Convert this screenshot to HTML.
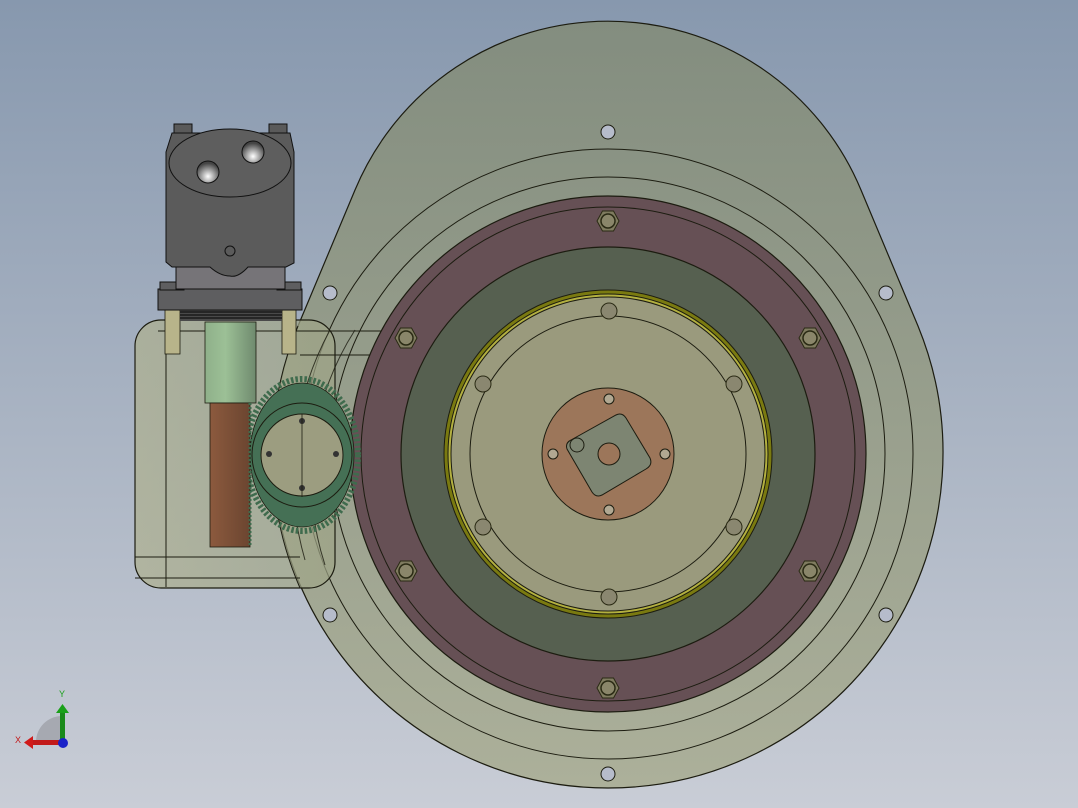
<!DOCTYPE html>
<html><head><meta charset="utf-8"><style>
html,body{margin:0;padding:0;width:1078px;height:808px;overflow:hidden}
svg{display:block}
</style></head><body>
<svg width="1078" height="808" viewBox="0 0 1078 808" xmlns="http://www.w3.org/2000/svg">
<defs>
<linearGradient id="bg" x1="0" y1="0" x2="0" y2="1">
<stop offset="0" stop-color="#8798ae"/><stop offset="1" stop-color="#c9cdd6"/>
</linearGradient>
<linearGradient id="hs" x1="0" y1="0" x2="0" y2="1">
<stop offset="0" stop-color="#838d7f"/><stop offset="1" stop-color="#acb09a"/>
</linearGradient>
<linearGradient id="shaft" x1="0" y1="0" x2="1" y2="0">
<stop offset="0" stop-color="#8fb08a"/><stop offset="0.4" stop-color="#9cc096"/><stop offset="1" stop-color="#6f8a6e"/>
</linearGradient>
<linearGradient id="rack" x1="0" y1="0" x2="1" y2="0">
<stop offset="0" stop-color="#8c5a3e"/><stop offset="1" stop-color="#6b4530"/>
</linearGradient>
<linearGradient id="box" x1="0" y1="0" x2="1" y2="0">
<stop offset="0" stop-color="#aeb08e"/><stop offset="1" stop-color="#9ea487"/>
</linearGradient>
<radialGradient id="hole" cx="0.5" cy="0.7" r="0.6">
<stop offset="0" stop-color="#ffffff"/><stop offset="1" stop-color="#444"/>
</radialGradient>
<g id="bolt"><polygon points="-11,0 -5.5,-10 5.5,-10 11,0 5.5,10 -5.5,10" fill="#7f7b5f" stroke="#2a2a14" stroke-width="1"/><circle r="7" fill="#8a866a" stroke="#2a2a14" stroke-width="1.5"/></g>
<g id="sbolt"><circle r="8" fill="#8a8770" stroke="#2a2a14" stroke-width="1"/></g>
</defs>
<rect width="1078" height="808" fill="url(#bg)"/>

<!-- housing -->
<path d="M355,190 A274,274 0 0 1 861,190 L918,326 A335,335 0 1 1 298,326 Z" fill="url(#hs)" stroke="#1c1c10" stroke-width="1.2"/>
<g fill="none" stroke="#1c1c10" stroke-width="1">
<circle cx="608" cy="454" r="305"/>
<circle cx="608" cy="454" r="277"/>
</g>
<g fill="#b6bccb" stroke="#1c1c10" stroke-width="1">
<circle cx="608" cy="132" r="7"/><circle cx="608" cy="774" r="7"/>
<circle cx="886" cy="293" r="7"/><circle cx="886" cy="615" r="7"/>
<circle cx="330" cy="293" r="7"/><circle cx="330" cy="615" r="7"/>
</g>

<!-- gearbox box -->
<rect x="135" y="320" width="200" height="268" rx="26" fill="url(#box)" fill-opacity="0.7" stroke="#1c1c10" stroke-width="1.2"/>
<g fill="none" stroke="#1c1c10" stroke-width="1">
<line x1="166" y1="330" x2="166" y2="587"/>
<line x1="135" y1="557" x2="300" y2="557"/>
<line x1="158" y1="331" x2="400" y2="331"/>
<line x1="135" y1="578" x2="300" y2="578"/>
<line x1="300" y1="355" x2="395" y2="355"/>
<rect x="398" y="320" width="40" height="265"/>
</g>
<!-- housing edge visible through box -->
<path d="M298,326 A335,335 0 0 0 300,588" fill="none" stroke="#1c1c10" stroke-width="1"/>

<!-- maroon ring -->
<circle cx="608" cy="454" r="258" fill="#665055" stroke="#1c1c10" stroke-width="1.2"/>
<circle cx="608" cy="454" r="247" fill="none" stroke="#1c1c10" stroke-width="1"/>
<circle cx="608" cy="454" r="207" fill="#566050" stroke="#1c1c10" stroke-width="1.2"/>
<!-- yellow ring -->
<circle cx="608" cy="454" r="164" fill="#7a7a10" stroke="#1c1c10" stroke-width="1"/>
<circle cx="608" cy="454" r="160" fill="#b3b040" stroke="#1c1c10" stroke-width="1"/>
<circle cx="608" cy="454" r="157" fill="#9a9a7d" stroke="#1c1c10" stroke-width="1"/>
<circle cx="608" cy="454" r="138" fill="none" stroke="#1c1c10" stroke-width="1"/>
<!-- copper -->
<circle cx="608" cy="454" r="66" fill="#9c765a" stroke="#1c1c10" stroke-width="1"/>
<path d="M571,440 L616,415 Q622,412 626,418 L650,458 Q653,465 646,469 L602,495 Q596,498 592,492 L567,449 Q565,443 571,440 Z" fill="#7d8572" stroke="#1c1c10" stroke-width="1"/>
<circle cx="577" cy="445" r="7" fill="#7d8572" stroke="#1c1c10" stroke-width="1"/>
<circle cx="609" cy="454" r="11" fill="#9c765a" stroke="#1c1c10" stroke-width="1"/>
<g fill="#b1a892" stroke="#1c1c10" stroke-width="1">
<circle cx="609" cy="399" r="5"/><circle cx="609" cy="510" r="5"/>
<circle cx="553" cy="454" r="5"/><circle cx="665" cy="454" r="5"/>
</g>
<!-- bolts -->
<use href="#bolt" x="608" y="221"/><use href="#bolt" x="608" y="688"/>
<use href="#bolt" x="406" y="338"/><use href="#bolt" x="810" y="338"/>
<use href="#bolt" x="406" y="571"/><use href="#bolt" x="810" y="571"/>
<use href="#sbolt" x="609" y="311"/><use href="#sbolt" x="609" y="597"/>
<use href="#sbolt" x="483" y="384"/><use href="#sbolt" x="734" y="384"/>
<use href="#sbolt" x="483" y="527"/><use href="#sbolt" x="734" y="527"/>

<!-- housing lines crossing gearbox (transparent look) -->
<g fill="none" stroke="#1c1c10" stroke-width="1" opacity="0.8">
<path d="M330,330 A305,305 0 0 0 305,560"/>
<path d="M355,330 A277,277 0 0 0 325,565"/>
</g>

<!-- gear -->
<ellipse cx="302" cy="455" rx="56" ry="76" fill="none" stroke="#3f6b4d" stroke-width="6" stroke-dasharray="2.5 2"/>
<ellipse cx="302" cy="455" rx="52" ry="72" fill="#457055" stroke="#1c1c10" stroke-width="0.8"/>
<ellipse cx="302" cy="455" rx="50" ry="52" fill="none" stroke="#1c1c10" stroke-width="1"/>
<circle cx="302" cy="455" r="41" fill="#9c9d80" stroke="#1c1c10" stroke-width="1"/>
<g fill="#333" ><circle cx="302" cy="421" r="3"/><circle cx="302" cy="488" r="3"/><circle cx="269" cy="454" r="3"/><circle cx="336" cy="454" r="3"/></g>
<line x1="302" y1="414" x2="302" y2="497" stroke="#1c1c10" stroke-width="0.8"/>

<!-- shaft & rack -->
<rect x="205" y="322" width="51" height="81" fill="url(#shaft)" stroke="#1c1c10" stroke-width="0.8"/>
<rect x="210" y="403" width="40" height="144" fill="url(#rack)" stroke="#1c1c10" stroke-width="0.8"/>
<line x1="250" y1="403" x2="250" y2="547" stroke="#3f6b4d" stroke-width="3" stroke-dasharray="2 2"/>

<!-- posts -->
<rect x="165" y="309" width="15" height="45" fill="#b8b48a" stroke="#1c1c10" stroke-width="0.8"/>
<rect x="282" y="309" width="14" height="45" fill="#b8b48a" stroke="#1c1c10" stroke-width="0.8"/>
<!-- grooves -->
<rect x="180" y="309" width="102" height="12" fill="#4a4a4a"/>
<g stroke="#111" stroke-width="1.2"><line x1="180" y1="312" x2="282" y2="312"/><line x1="180" y1="315" x2="282" y2="315"/><line x1="180" y1="318" x2="282" y2="318"/></g>
<!-- flange -->
<rect x="158" y="289" width="144" height="21" fill="#5e5e60" stroke="#111" stroke-width="1"/>
<rect x="160" y="282" width="24" height="8" fill="#5e5e60" stroke="#111" stroke-width="1"/>
<rect x="277" y="282" width="24" height="8" fill="#5e5e60" stroke="#111" stroke-width="1"/>
<!-- collar -->
<rect x="176" y="262" width="109" height="27" fill="#767478" stroke="#111" stroke-width="1"/>
<!-- motor block -->
<rect x="174" y="124" width="18" height="12" fill="#5a5a5a" stroke="#111" stroke-width="1"/>
<rect x="269" y="124" width="18" height="12" fill="#5a5a5a" stroke="#111" stroke-width="1"/>
<path d="M166,152 L172,133 L290,133 L294,152 L294,263 L286,267 L248,267 Q238,278 230,276 Q220,276 210,267 L172,267 L166,262 Z" fill="#5b5b5b" stroke="#111" stroke-width="1"/>
<ellipse cx="230" cy="163" rx="61" ry="34" fill="#5e5e5e" stroke="#111" stroke-width="1"/>
<circle cx="208" cy="172" r="11" fill="url(#hole)" stroke="#111" stroke-width="1"/>
<circle cx="253" cy="152" r="11" fill="url(#hole)" stroke="#111" stroke-width="1"/>
<circle cx="230" cy="251" r="5" fill="none" stroke="#111" stroke-width="1"/>

<!-- triad -->
<path d="M36,742 A26,26 0 0 1 62,716 L62,742 Z" fill="#a6a9b1"/>
<rect x="60" y="712" width="5" height="30" fill="#1a8a1a"/>
<polygon points="56,713 62.5,704 69,713" fill="#1aa01a"/>
<rect x="32" y="740" width="30" height="5" fill="#c21a1a"/>
<polygon points="33,736 24,742.5 33,749" fill="#d01a1a"/>
<circle cx="63" cy="743" r="5" fill="#1a22c8"/>
<text x="59" y="697" font-family="Liberation Sans, sans-serif" font-size="9" fill="#1aa01a">Y</text>
<text x="15" y="743" font-family="Liberation Sans, sans-serif" font-size="9" fill="#c21a1a">X</text>
</svg>
</body></html>
